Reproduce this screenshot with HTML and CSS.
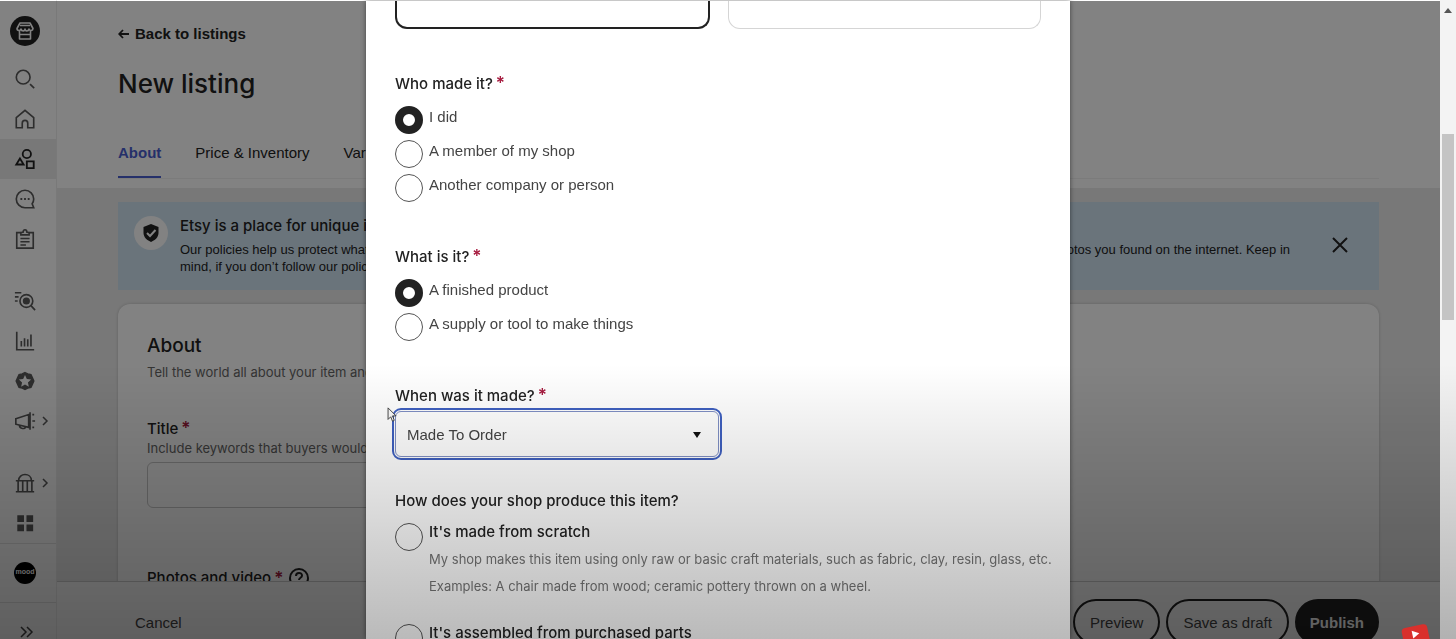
FILE: index.html
```html
<!DOCTYPE html>
<html lang="en">
<head>
  <meta charset="UTF-8" />
  <meta name="viewport" content="width=device-width, initial-scale=1.0"/>
  <title>New listing</title>
  <link rel="stylesheet" href="styles.css">
</head>
<body>

<div class="app">
  <nav class="sidebar">
    <a href="#" class="nav-item logo" aria-label="Shop Manager">
      <svg width="30" height="30" viewBox="0 0 30 30">
        <circle cx="15" cy="15" r="15" fill="#222"/>
        <g fill="none" stroke="#fff" stroke-width="1.6" stroke-linejoin="round">
          <path d="M10 7h10l3 5.500c0 2.500-3.500 2.500-4 .5-.5 2.500-4 2.500-4 0 0 2.500-3.500 2.500-4 0-.5 2-4 2-4-.5z"/>
          <path d="M9.500 15v8h11v-8M9.500 18.500h11M10 9.500h10"/>
        </g>
      </svg>
    </a>
    <a href="#" class="nav-item" aria-label="Search">
      <svg class="icon" viewBox="0 0 24 24"><circle cx="10" cy="10" r="7.500"/><path d="M17.500 17.500l4.500 4.500"/></svg>
    </a>
    <a href="#" class="nav-item" aria-label="Dashboard">
      <svg class="icon" viewBox="0 0 24 24"><path d="M2.500 10.500L12 2.500l9.500 8V21.500h-6.500v-5c0-1.500-1-3-3-3s-3 1.500-3 3v5H2.500z"/></svg>
    </a>
    <a href="#" class="nav-item active" aria-label="Listings">
      <svg class="icon" viewBox="0 0 24 24"><circle cx="14" cy="6.500" r="4.500"/><path d="M6.500 11.500L2.500 18h8zM14 14.500h7.500V22H14z"/></svg>
    </a>
    <a href="#" class="nav-item" aria-label="Messages">
      <svg class="icon" viewBox="0 0 24 24"><path d="M21.500 21.500H12a9.500 9.500 0 1 1 9.500-9.500c0 2-.7 3.800-1.700 5.200z"/><path d="M7 12h2M11 12h2M15 12h2" stroke-width="2.200"/></svg>
    </a>
    <a href="#" class="nav-item" aria-label="Orders">
      <svg class="icon" viewBox="0 0 24 24"><path d="M7.500 5H3v17h18V5h-4.500M7.500 7.500V5L10 4.500c0-3.500 4-3.500 4 0l2.500.5v2.500zM7 11.500h10M7 15h10M7 18.500h6"/></svg>
    </a>
    <a href="#" class="nav-item spaced" aria-label="Search visibility">
      <svg class="icon" viewBox="0 0 24 24"><circle cx="13.500" cy="12" r="7"/><circle cx="13.500" cy="12" r="3" class="solid"/><path d="M18.500 17l4.500 5M1 3h7M1 7.500h4M1 12h3"/></svg>
    </a>
    <a href="#" class="nav-item" aria-label="Stats">
      <svg class="icon" viewBox="0 0 24 24"><path d="M3 2v19.500h19M8 18v-6M11.500 18V9M15 18v-8M18.500 18V5"/></svg>
    </a>
    <a href="#" class="nav-item" aria-label="Star Seller">
      <svg class="icon" viewBox="0 0 24 24"><path class="solid" d="M12 3l3 1.300 3.400.9L20 8.500 21.500 12 20 15.500l-1.600 3.300-3.400.9L12 21l-3-1.300-3.400-.9L4 15.500 2.500 12 4 8.500l1.600-3.300L9 4.300z"/><path class="star" d="M12 5.500l2 4.400 4.700.5-3.500 3.200 1 4.700-4.200-2.400-4.200 2.400 1-4.700-3.500-3.200 4.700-.5z"/></svg>
    </a>
    <a href="#" class="nav-item" aria-label="Marketing">
      <svg class="icon" viewBox="0 0 24 24"><path d="M2 9.500l14-4.500v14L2 15.500zM6 17c0 4 6.500 4 6.500 1.500M17.500 2.500v19M20 5h2M20 12h3M20 19h2"/></svg>
      <svg class="chevron" viewBox="0 0 8 12"><path d="M2 2l4 4-4 4"/></svg>
    </a>
    <a href="#" class="nav-item spaced" aria-label="Finances">
      <svg class="icon" viewBox="0 0 24 24"><path d="M2 9.500h20M2 21.500h20M5 9.500c0-9 14-9 14 0M4.500 10v11M9.500 10v11M14.500 10v11M19.500 10v11"/></svg>
      <svg class="chevron" viewBox="0 0 8 12"><path d="M2 2l4 4-4 4"/></svg>
    </a>
    <a href="#" class="nav-item" aria-label="Integrations">
      <svg class="icon" viewBox="0 0 24 24"><path class="solid" d="M4.500 4.500h5.500v5.500h-5.500zM14.500 4.500h5.500v5.500h-5.500zM4.500 14.500h5.500v5.500h-5.500zM14.500 14.500h5.500v5.500h-5.500z"/></svg>
    </a>
    <div class="account">
      <a href="#" class="avatar">mood</a>
    </div>
    <button class="expand" aria-label="Expand menu">
      <svg width="16" height="12" viewBox="0 0 16 12"><path d="M2 1l5 5-5 5M8 1l5 5-5 5"/></svg>
    </button>
  </nav>

  <main class="main">
    <header class="header">
      <a href="#" class="back"><svg width="12" height="12" viewBox="0 0 12 12"><path d="M11 6H1.500M5 2L1.200 6 5 10"/></svg>Back to listings</a>
      <h1>New listing</h1>
      <div class="tabs">
        <a href="#" class="tab selected">About</a>
        <a href="#" class="tab">Price &amp; Inventory</a>
        <a href="#" class="tab">Variations</a>
      </div>
    </header>

    <div class="content">
      <section class="banner">
        <span class="shield">
          <svg width="18" height="20" viewBox="0 0 18 20"><path fill="#222" d="M9 1l7.500 3v6c0 4.500-4 7.500-7.500 9-3.500-1.500-7.500-4.500-7.500-9V4z"/><path fill="none" stroke="#fff" stroke-width="2" d="M5 10l3 3 5.500-6"/></svg>
        </span>
        <div class="banner-text">
          <h2>Etsy is a place for unique items</h2>
          <div class="banner-line"><span>Our policies help us protect what's special.</span><span>Don't use photos you found on the internet. Keep in</span></div>
          <div class="banner-line"><span>mind, if you don’t follow our policies</span></div>
        </div>
        <button class="close" aria-label="Close"><svg width="16" height="16" viewBox="0 0 16 16"><path d="M1 1l14 14M15 1L1 15"/></svg></button>
      </section>

      <section class="card">
        <h2>About</h2>
        <p class="hint">Tell the world all about your item and why they'll love it.</p>
        <label for="title" class="field-label">Title<span class="req">*</span></label>
        <p class="hint">Include keywords that buyers would use to search.</p>
        <input type="text" id="title" class="text-input" />
        <h3 class="photos">Photos and video<span class="req">*</span>
          <svg width="20" height="20" viewBox="0 0 20 20"><circle cx="10" cy="10" r="9"/><path d="M7 8c0-4 6-4 6-.5 0 2.500-3 2-3 4.500M10 13.500v2"/></svg>
        </h3>
      </section>
    </div>

    <footer class="footer">
      <button class="cancel">Cancel</button>
      <div class="actions">
        <button class="btn">Preview</button>
        <button class="btn">Save as draft</button>
        <button class="btn primary">Publish</button>
      </div>
    </footer>
  </main>
</div>

<div class="overlay">
  <form class="modal">
    <div class="types">
      <div class="type chosen"></div>
      <div class="type"></div>
    </div>

    <fieldset>
      <legend>Who made it?<span class="req">*</span></legend>
      <label class="option"><input type="radio" name="who" checked /><span>I did</span></label>
      <label class="option"><input type="radio" name="who" /><span>A member of my shop</span></label>
      <label class="option"><input type="radio" name="who" /><span>Another company or person</span></label>
    </fieldset>

    <fieldset>
      <legend>What is it?<span class="req">*</span></legend>
      <label class="option"><input type="radio" name="what" checked /><span>A finished product</span></label>
      <label class="option"><input type="radio" name="what" /><span>A supply or tool to make things</span></label>
    </fieldset>

    <div class="when">
      <label for="when">When was it made?<span class="req">*</span></label>
      <div class="select-wrap">
        <select id="when">
          <option>Made To Order</option>
          <option>2020 - 2024</option>
        </select>
        <svg class="caret" width="10" height="6" viewBox="0 0 10 6"><path d="M1 0h8L5 6z"/></svg>
      </div>
    </div>

    <fieldset class="production">
      <legend>How does your shop produce this item?</legend>
      <label class="option detailed"><input type="radio" name="how" />
        <span>
          <strong>It's made from scratch</strong>
          <small>My shop makes this item using only raw or basic craft materials, such as fabric, clay, resin, glass, etc.</small>
          <small>Examples: A chair made from wood; ceramic pottery thrown on a wheel.</small>
        </span>
      </label>
      <label class="option detailed"><input type="radio" name="how" />
        <span><strong>It's assembled from purchased parts</strong></span>
      </label>
    </fieldset>
  </form>
</div>

<div class="scrollbar">
  <svg width="8" height="5" viewBox="0 0 8 5"><path d="M0 5l4-5 4 5z"/></svg>
  <div class="thumb"></div>
</div>

<div class="shade"></div>

<svg class="play" viewBox="0 0 32 24"><g transform="rotate(-12 16 14)"><rect x="3" y="3" width="26" height="22" rx="4" fill="#d9302c"/><path d="M13 7l7 4-7 4z" fill="#fff"/></g></svg>
<svg class="cursor" viewBox="0 0 12 18"><path d="M1 1v13l3-3 2 5 2-1-2-5h4z"/></svg>

</body>
</html>
```

FILE: styles.css
```css
* {
  box-sizing: border-box;
}

body {
  margin: 0;
  height: 100vh;
  overflow: hidden;
  background: #fff;
  color: #222;
  font-family: "Liberation Sans", Arial, sans-serif;
  font-size: 15px;
}

h1, h2, h3, p, fieldset {
  margin: 0;
  padding: 0;
  border: none;
  font-weight: 500;
}

a {
  color: inherit;
  text-decoration: none;
}

button {
  font: inherit;
  color: inherit;
  background: none;
  border: none;
  padding: 0;
}

svg {
  display: block;
  flex: none;
}

.req {
  color: #a61a3e;
  margin-left: 3px;
  font-size: 17px;
  font-weight: 600;
  line-height: 1;
}

.app {
  display: flex;
  height: 100vh;
  padding-right: 16px;
}

/* sidebar */
.sidebar {
  width: 57px;
  flex: none;
  border-right: 1px solid #eee;
  display: flex;
  flex-direction: column;
}

.nav-item {
  height: 40px;
  padding-left: 14px;
  display: flex;
  align-items: center;
  gap: 5px;
  flex: none;
}

.nav-item.logo {
  height: 59px;
  padding: 3px 0 0 10px;
}

.nav-item.active {
  background: #ebebeb;
}

.nav-item.spaced {
  margin-top: 22px;
}

.icon {
  width: 22px;
  height: 22px;
  fill: none;
  stroke: #595959;
  stroke-width: 1.8;
}

.active .icon {
  stroke: #222;
  stroke-width: 2;
}

.icon .solid {
  fill: #595959;
}

.icon .star {
  fill: #fff;
  stroke: none;
}

.chevron {
  width: 8px;
  height: 12px;
  fill: none;
  stroke: #595959;
  stroke-width: 1.5;
}

.account {
  height: 60px;
  border-top: 1px solid #e4e4e4;
  border-bottom: 1px solid #e4e4e4;
  display: flex;
  align-items: center;
  padding-left: 14px;
  flex: none;
}

.avatar {
  width: 22px;
  height: 22px;
  border-radius: 50%;
  background: #000;
  color: #fff;
  font-size: 7px;
  font-weight: bold;
  line-height: 20px;
  text-align: center;
}

.expand {
  padding: 23px 0 0 19px;
}

.expand path {
  fill: none;
  stroke: #444;
  stroke-width: 1.5;
}

/* page behind the dialog */
.main {
  flex: 1;
  min-width: 0;
  display: flex;
  flex-direction: column;
}

.header {
  padding: 24px 61px 9px;
}

.back {
  display: flex;
  align-items: center;
  gap: 5px;
  font-weight: bold;
  line-height: 20px;
}

.back path {
  fill: none;
  stroke: #222;
  stroke-width: 1.8;
}

h1 {
  margin-top: 22px;
  font-family: Inter, sans-serif;
  font-size: 26px;
  line-height: 36px;
}

.tabs {
  margin-top: 39px;
  display: flex;
  gap: 34px;
  border-bottom: 1px solid #f2f2f2;
}

.tab {
  height: 37px;
  line-height: 24px;
}

.tab.selected {
  color: #4a5fd0;
  font-weight: bold;
  border-bottom: 2px solid #4a5fd0;
}

.content {
  flex: 1;
  min-height: 0;
  overflow: hidden;
  background: #ebebeb;
  padding: 14px 61px 0;
}

.banner {
  display: flex;
  height: 88px;
  padding: 14px 31px 0 16px;
  background: #d0e4f2;
}

.shield {
  width: 34px;
  height: 34px;
  border-radius: 50%;
  background: #fff;
  display: flex;
  align-items: center;
  justify-content: center;
}

.banner-text {
  flex: 1;
  padding-left: 12px;
}

.banner h2 {
  font-family: Inter, sans-serif;
  font-size: 15px;
  line-height: 20px;
  margin-bottom: 5px;
}

.banner-line {
  display: flex;
  justify-content: space-between;
  padding-right: 42px;
  font-size: 13px;
  line-height: 17px;
}

.close {
  align-self: flex-start;
  margin-top: 21px;
}

.close path {
  stroke: #222;
  stroke-width: 2;
}

.card {
  margin-top: 14px;
  height: 400px;
  padding: 30px 29px;
  background: #fff;
  border-radius: 12px;
  box-shadow: 0 0 3px rgba(0, 0, 0, 0.2);
}

.card h2 {
  font-family: Inter, sans-serif;
  font-size: 19px;
  line-height: 24px;
}

.hint {
  font-family: Inter, sans-serif;
  font-size: 13px;
  font-weight: 400;
  line-height: 18px;
  color: #666;
}

.card h2 + .hint {
  margin-top: 5px;
}

.field-label {
  display: block;
  margin-top: 38px;
  font-family: Inter, sans-serif;
  font-weight: 500;
  line-height: 20px;
}

.text-input {
  display: block;
  width: 75%;
  height: 46px;
  margin-top: 5px;
  border: 1px solid #c8c8c8;
  border-radius: 6px;
  background: #fff;
}

.photos {
  display: flex;
  align-items: center;
  margin-top: 60px;
  font-family: Inter, sans-serif;
  font-size: 15px;
  line-height: 20px;
}

.photos svg {
  margin-left: 6px;
  fill: none;
  stroke: #222;
  stroke-width: 2;
}

.footer {
  height: 58px;
  flex: none;
  padding: 17px 61px 0 78px;
  border-top: 1px solid #d0d0d0;
  display: flex;
  justify-content: space-between;
}

.cancel {
  height: 46px;
  color: #444;
}

.actions {
  display: flex;
  gap: 6px;
}

.btn {
  height: 46px;
  padding: 0 15px;
  border: 2px solid #222;
  border-radius: 23px;
  color: #444;
  white-space: nowrap;
}

.btn.primary {
  padding: 0 13px;
  background: #222;
  color: #fff;
  font-weight: bold;
}

/* dialog */
.overlay {
  position: fixed;
  inset: 1px 16px 0 0;
  background: rgba(0, 0, 0, 0.49);
  display: flex;
  justify-content: center;
  padding-right: 4px;
}

.modal {
  width: 704px;
  height: 100%;
  overflow: hidden;
  padding: 0 29px;
  background: #fff;
  box-shadow: 0 0 5px rgba(0, 0, 0, 0.5);
}

.types {
  display: flex;
  gap: 18px;
  margin-bottom: 44px;
}

.type {
  flex: 1;
  height: 28px;
  border: 1px solid #d5d5d5;
  border-top: none;
  border-radius: 0 0 12px 12px;
}

.type.chosen {
  border: 2px solid #222;
  border-top: none;
}

fieldset {
  margin-bottom: 40px;
}

legend,
.when label {
  display: block;
  padding: 0;
  margin-bottom: 9px;
  font-family: Inter, sans-serif;
  font-weight: 500;
  line-height: 22px;
}

.option {
  display: flex;
  gap: 6px;
  height: 34px;
  color: #444;
  line-height: 26px;
}

.option input {
  appearance: none;
  flex: none;
  width: 28px;
  height: 28px;
  margin: 2px 0 0;
  border: 1px solid #555;
  border-radius: 50%;
  background: #fff;
}

.option input:checked {
  border: 8px solid #222;
}

.when label {
  margin-bottom: 4px;
}

.select-wrap {
  position: relative;
  width: 324px;
}

select {
  appearance: none;
  display: block;
  width: 100%;
  height: 46px;
  padding: 0 11px;
  border: 1px solid #7f8fc4;
  border-radius: 6px;
  outline: 2px solid #3f60c0;
  outline-offset: 1px;
  background: transparent;
  color: #444;
  font: inherit;
}

.caret {
  position: absolute;
  right: 17px;
  top: 21px;
  fill: #111;
}

.production {
  margin-top: 33px;
}

.option.detailed {
  height: auto;
  margin-bottom: 22px;
}

.option.detailed input {
  background: transparent;
}

.option strong {
  display: block;
  font-family: Inter, sans-serif;
  font-weight: 500;
  color: #222;
  line-height: 22px;
  margin-bottom: 3px;
}

.option small {
  display: block;
  font-family: Inter, sans-serif;
  font-size: 13px;
  font-weight: 400;
  line-height: 27px;
  color: #757575;
  white-space: nowrap;
}

.scrollbar {
  position: fixed;
  inset: 0 0 0 auto;
  width: 16px;
  padding: 8px 2px 0;
  background: #f3f3f3;
}

.scrollbar svg {
  margin: 0 auto;
  fill: #555;
}

.thumb {
  height: 186px;
  margin-top: 121px;
  background: #c4c4c4;
}

/* darkening towards the bottom of the window */
.shade {
  position: fixed;
  inset: 0;
  pointer-events: none;
  background: linear-gradient(to bottom, rgba(0, 0, 0, 0) 57%, rgba(0, 0, 0, 0.27) 100%);
}

.play {
  position: fixed;
  right: 24px;
  bottom: -8px;
  width: 32px;
  height: 24px;
}

.cursor {
  position: fixed;
  left: 387px;
  top: 407px;
  width: 11px;
  height: 16px;
  fill: #eee;
  stroke: #333;
}
```
